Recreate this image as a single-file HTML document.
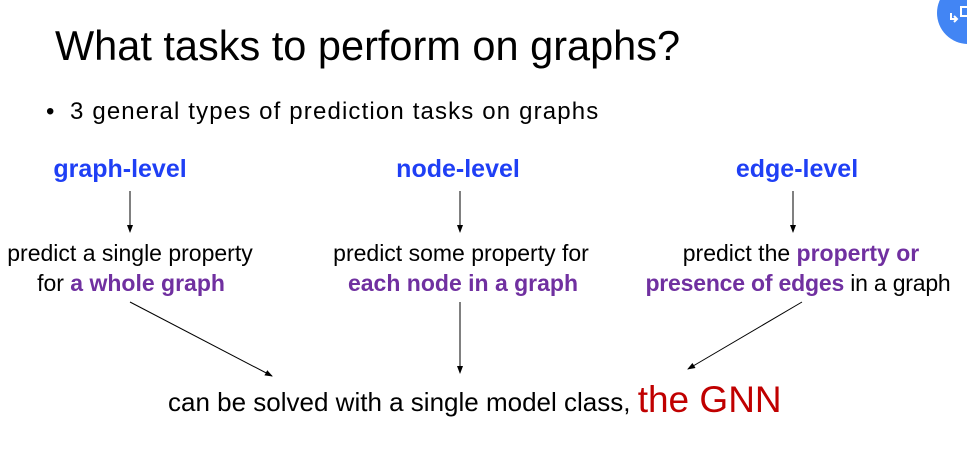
<!DOCTYPE html>
<html><head><style>
body{margin:0;width:967px;height:461px;background:#fff;overflow:hidden;position:relative;font-family:"Liberation Sans",sans-serif;color:#000}
.t{position:absolute;white-space:nowrap}
.c{transform:translateX(-50%)}
.b{font-weight:bold;color:#1f3ff5}
.p{font-weight:bold;color:#7030a0}
</style></head><body>
<div class="t" style="left:55px;top:22px;font-size:41.5px">What tasks to perform on graphs?</div>
<div class="t" style="left:46px;top:98px;font-size:24px">•</div>
<div class="t" style="left:70px;top:98px;font-size:24px;letter-spacing:1.15px">3 general types of prediction tasks on graphs</div>
<div class="t b c" style="left:120px;top:155px;font-size:25px">graph-level</div>
<div class="t b c" style="left:458px;top:155px;font-size:25px">node-level</div>
<div class="t b c" style="left:797px;top:155px;font-size:25px">edge-level</div>
<div class="t c" style="left:130px;top:240px;font-size:23px">predict a single property</div>
<div class="t c" style="left:131px;top:270px;font-size:23px">for <span class="p">a whole graph</span></div>
<div class="t c" style="left:461px;top:240px;font-size:23px">predict some property for</div>
<div class="t c" style="left:463px;top:270px;font-size:23px"><span class="p">each node in a graph</span></div>
<div class="t c" style="left:801px;top:240px;font-size:23px">predict the <span class="p">property or</span></div>
<div class="t c" style="left:798px;top:270px;font-size:23px;letter-spacing:-0.2px"><span class="p">presence of edges</span> in a graph</div>
<div class="t" style="left:168px;top:378px;font-size:26px">can be solved with a single model class, <span style="color:#c00000;font-size:37px;position:relative;top:1px">the GNN</span></div>
<svg width="967" height="461" style="position:absolute;left:0;top:0">
<defs><marker id="a" markerWidth="8" markerHeight="8" refX="7" refY="4" orient="auto" markerUnits="userSpaceOnUse"><path d="M0,1 L8,4 L0,7z" fill="#000"/></marker></defs>
<g stroke="#000" stroke-width="1">
<line x1="130" y1="191" x2="130" y2="232" marker-end="url(#a)"/>
<line x1="460" y1="191" x2="460" y2="232" marker-end="url(#a)"/>
<line x1="793" y1="191" x2="793" y2="232" marker-end="url(#a)"/>
<line x1="130" y1="302" x2="272" y2="376" marker-end="url(#a)"/>
<line x1="460" y1="302" x2="460" y2="373" marker-end="url(#a)"/>
<line x1="802" y1="302" x2="688" y2="369" marker-end="url(#a)"/>
</g>
<circle cx="968" cy="13" r="31" fill="#4285f4"/>
<path d="M951 13v6h6M954 16l3 3-3 3" stroke="#fff" stroke-width="2" fill="none"/>
<rect x="961" y="7" width="8" height="9" stroke="#fff" stroke-width="2" fill="none"/>
</svg>
</body></html>
